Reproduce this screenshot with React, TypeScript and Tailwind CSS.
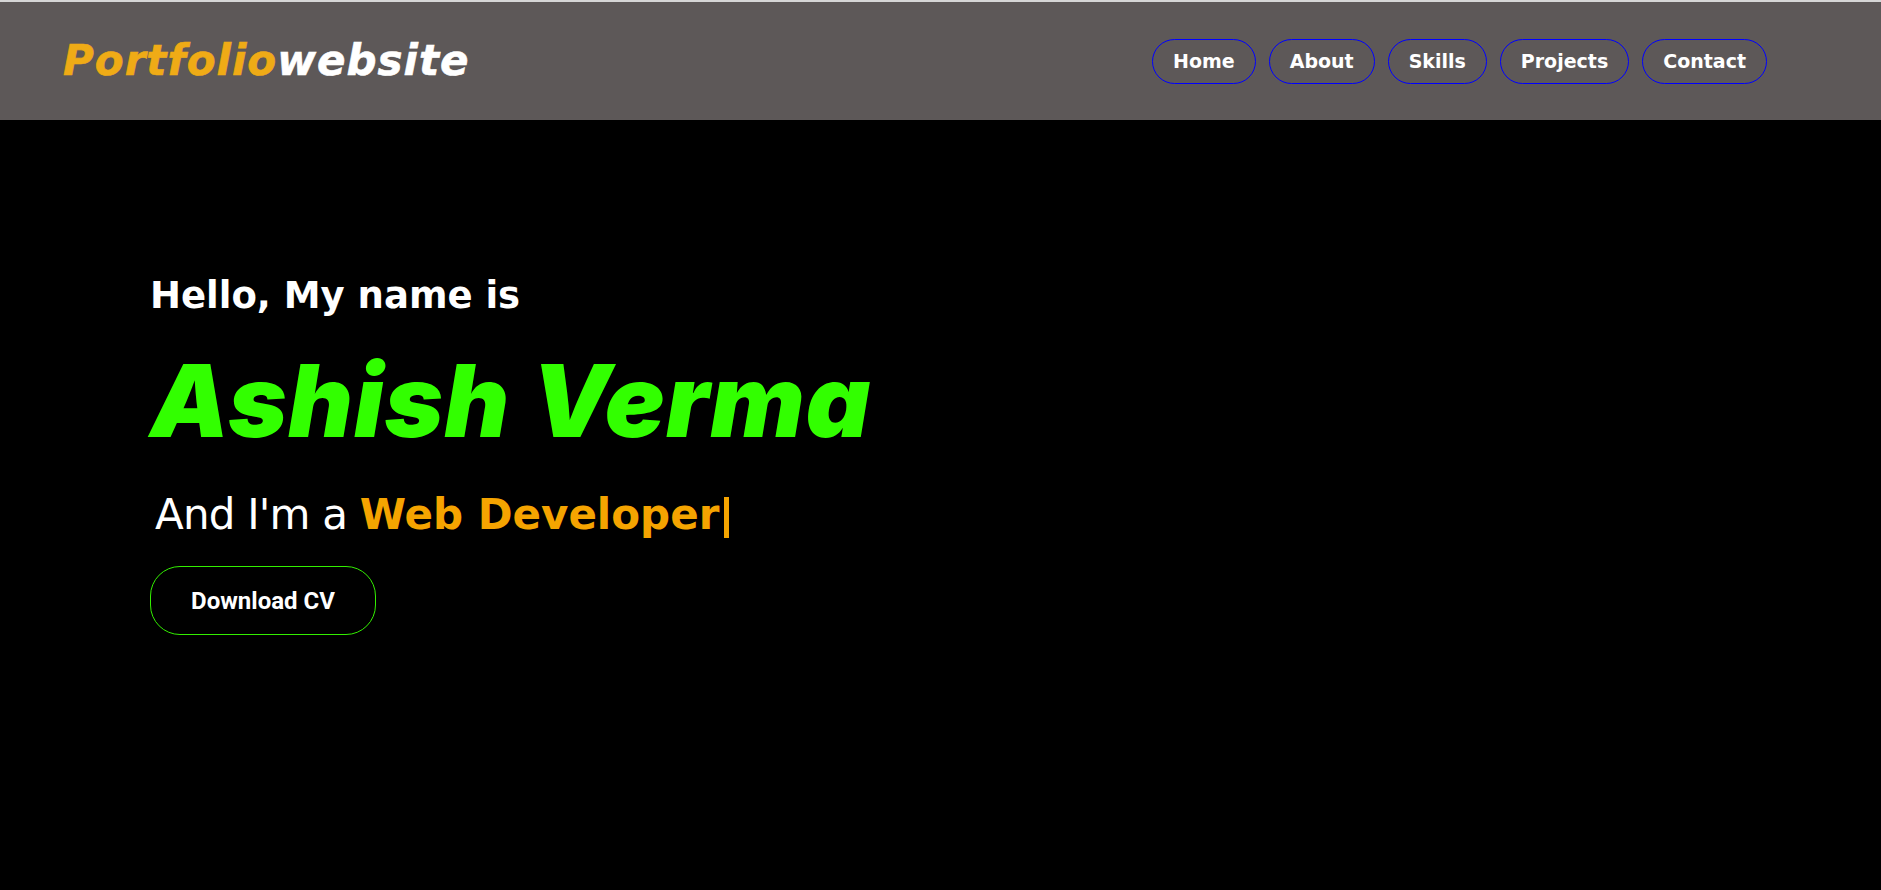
import React from "react";

const links = ["Home", "About", "Skills", "Projects", "Contact"];

// Montserrat isn't installed; DejaVu Sans has about the same widths
const wide = "font-['DejaVu_Sans','Liberation_Sans',sans-serif]";

export default function App() {
  return (
    <div className={`min-h-[890px] bg-black ${wide}`}>
      {/* Navbar */}
      <header className="flex h-[120px] items-center justify-between border-t-2 border-[#d6d6d6] bg-[#5d5858] pl-[63px] pr-[114px]">
        <a href="#" className="text-[42px] font-bold italic leading-none tracking-[1px] [-webkit-text-stroke:0.6px]">
          <span className="text-[#efab16]">Portfolio</span>
          <span className="text-white">website</span>
        </a>
        <nav className="flex items-center gap-[13px]">
          {links.map((l) => (
            <a
              key={l}
              href="#"
              className="rounded-full border border-[#0000ff] px-[20px] py-[10px] text-[19px] font-bold leading-[23px] text-white"
            >
              {l}
            </a>
          ))}
        </nav>
      </header>

      {/* Hero */}
      <section className="flex flex-col items-start pl-[150px] pt-[157px]">
        <h3 className="text-[37px] font-bold leading-none text-white">Hello, My name is</h3>
        <h1 className="mt-[37px] font-['Inter',sans-serif] text-[100px] font-black italic leading-none tracking-[1px] text-[#32ff00]">
          Ashish Verma
        </h1>
        <h2 className="ml-[5px] mt-[43px] h-[42px] whitespace-nowrap text-[42px] leading-none text-white">
          <span className="tracking-[-0.8px]">And I'm a </span>
          <span className="font-bold text-[#f5a400]">Web Developer</span>
          <span className="ml-[5px] inline-block h-[41px] w-[5px] bg-[#f5a400] align-[-9px]" />
        </h2>
        <a
          href="#"
          className="mt-[30px] flex h-[69px] w-[226px] items-center justify-center rounded-[30px] border border-[#33ee00] font-['Roboto',sans-serif] text-[24px] font-bold text-white"
        >
          Download CV
        </a>
      </section>
    </div>
  );
}
